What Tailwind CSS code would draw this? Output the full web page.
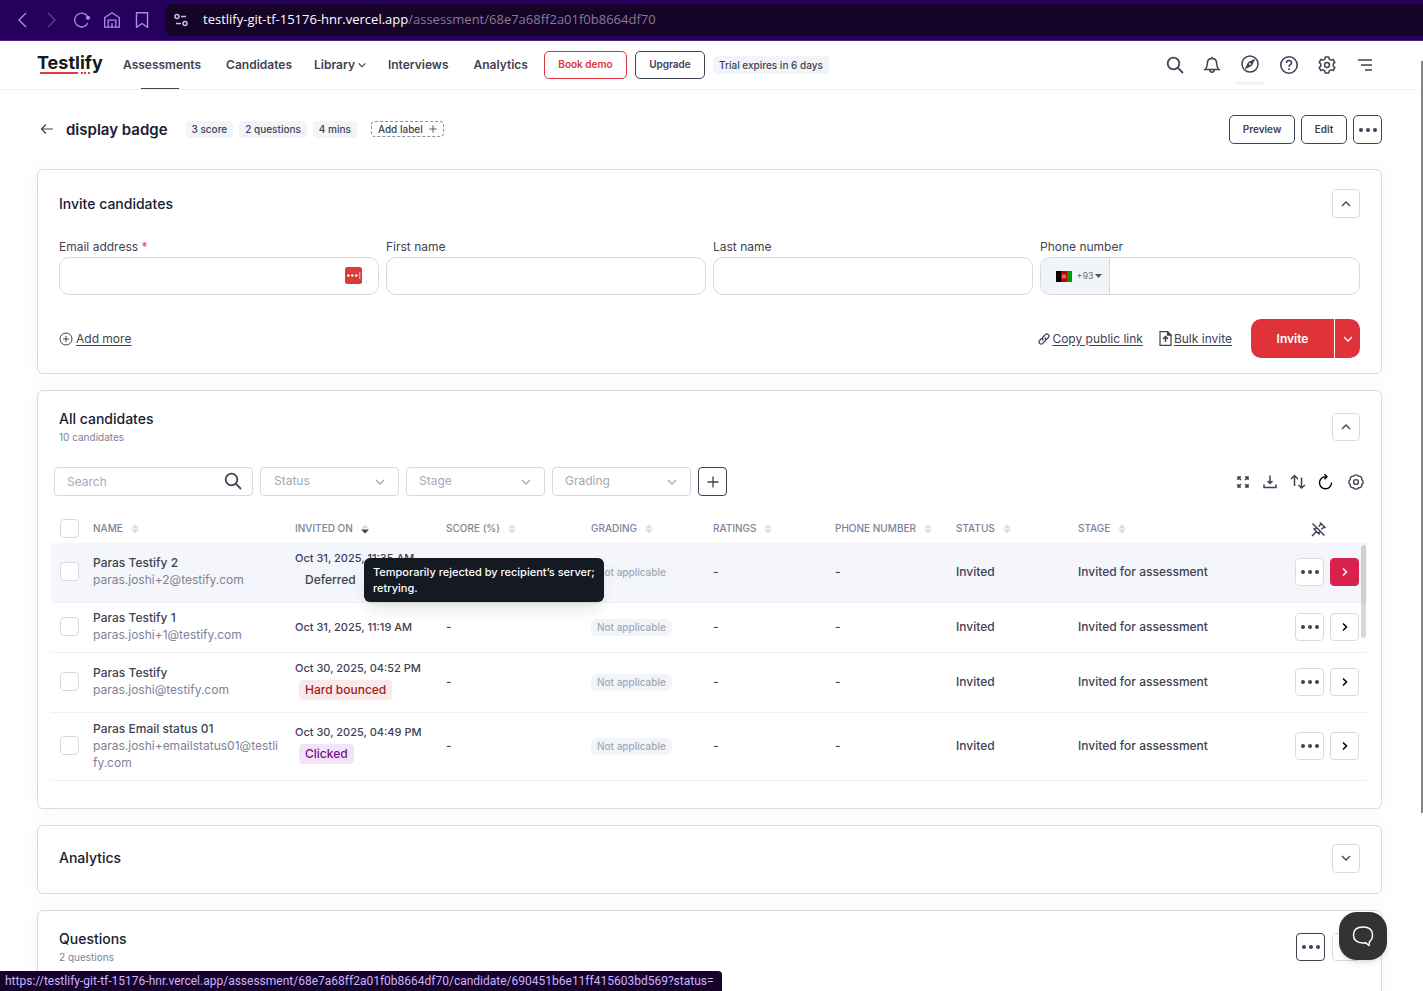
<!DOCTYPE html>
<html lang="en">
<head>
  <meta charset="UTF-8">
  <meta name="viewport" content="width=device-width, initial-scale=1">
  <title>Testlify - display badge</title>
  <script src="https://cdn.jsdelivr.net/npm/@tailwindcss/browser@4"></script>
</head>
<body class="h-screen overflow-hidden flex flex-col bg-white font-['Inter','Noto_Sans',sans-serif] text-xs text-[#3f4254]">

  <!-- Icon sprite -->
  <svg class="hidden">
    <symbol id="i-up" viewBox="0 0 12 12"><path d="M2 8l4-4 4 4" fill="none" stroke="currentColor" stroke-width="1.3"/></symbol>
    <symbol id="i-down" viewBox="0 0 12 12"><path d="M2 4l4 4 4-4" fill="none" stroke="currentColor" stroke-width="1.3"/></symbol>
    <symbol id="i-right" viewBox="0 0 12 12"><path d="M4 2.500L7.500 6 4 9.500" fill="none" stroke="currentColor" stroke-width="1.5"/></symbol>
    <symbol id="i-dots" viewBox="0 0 20 6"><g fill="currentColor"><circle cx="3" cy="3" r="2"/><circle cx="10" cy="3" r="2"/><circle cx="17" cy="3" r="2"/></g></symbol>
    <symbol id="i-search" viewBox="0 0 18 18"><g fill="none" stroke="currentColor" stroke-width="1.8"><circle cx="7.500" cy="7.500" r="5.800"/><path d="M11.700 11.700L17 17"/></g></symbol>
    <symbol id="i-sort" viewBox="0 0 8 10"><path d="M4 .5l4 4H0z" fill="#dcdcdf"/><path d="M4 9.500l-4-4h8z" fill="currentColor"/></symbol>
    <symbol id="i-plus" viewBox="0 0 12 12"><path d="M6 .5v11M.5 6h11" fill="none" stroke="currentColor" stroke-width="1.300"/></symbol>
  </svg>

  <!-- Browser bar -->
  <div class="shrink-0 h-[41px] bg-[#25005c] border-b border-[#4a1f86] flex items-center text-[#a98af5]">
    <div class="flex items-center gap-[14px] pl-[14px]">
      <button aria-label="Back"><svg class="size-4" viewBox="0 0 16 16" fill="none" stroke="currentColor" stroke-width="1.4"><path d="M12 1L5 8l7 7"/></svg></button>
      <button aria-label="Forward" class="text-[#5b3a9c]"><svg class="size-4" viewBox="0 0 16 16" fill="none" stroke="currentColor" stroke-width="1.400"><path d="M4 1l7 7-7 7"/></svg></button>
      <button aria-label="Reload"><svg class="size-4" viewBox="0 0 18 18" fill="none" stroke="currentColor" stroke-width="1.500"><path d="M15.500 12.500a7.800 7.800 0 1 1 .2-6.500"/><circle cx="15.700" cy="6.500" r="1.600" fill="currentColor"/></svg></button>
      <button aria-label="Home"><svg class="size-4" viewBox="0 0 16 16" fill="none" stroke="currentColor" stroke-width="1.300"><path d="M.7 5.500L8 .8l7.300 4.700v9.700H.7zM4.200 15V8.200h7.600V15M8 15v-4"/></svg></button>
      <button aria-label="Bookmark"><svg class="size-4" viewBox="0 0 16 16" fill="none" stroke="currentColor" stroke-width="1.400"><path d="M2.500.7h11v14.600L8 11.500l-5.500 3.800z"/></svg></button>
    </div>
    <div class="flex-1 ml-[15px] h-8 rounded-l-lg bg-[#150329] flex items-center gap-[15px] pl-[9px] font-['Open_Sans','Noto_Sans',sans-serif] text-[13px]">
      <svg class="size-[14px] text-[#c9c2d6]" viewBox="0 0 14 14" fill="none" stroke="currentColor" stroke-width="1.500"><circle cx="3" cy="3.500" r="2"/><path d="M7 3.500h5M2 10.500h5"/><circle cx="11" cy="10.500" r="2"/></svg>
      <p class="text-[#857b93]"><span class="text-white">testlify-git-tf-15176-hnr.vercel.app</span>/assessment/68e7a68ff2a01f0b8664df70</p>
    </div>
  </div>

  <!-- Page -->
  <div class="relative flex-1 min-h-0 overflow-hidden">
    <div class="absolute right-0 top-5 h-[752px] w-[2px] bg-[#85858a]"></div>

    <header class="h-[49px] border-b border-[#f1f2f5] mr-1 pl-[37px] pr-[44px] flex items-center justify-between">
      <nav class="flex items-center font-semibold">
        <a href="#" class="relative w-[65px] mr-[21px] pb-1 text-[18px] leading-6 font-bold text-[#151a22]">Testlify
          <svg class="absolute left-[3px] top-[21px] w-[51px] h-[2px]" viewBox="0 0 51 2" fill="#e8363d"><path d="M0 0h38v2H0zM41 0h2v2h-2zM44 0h2v2h-2zM48 0h2v2h-2z"/></svg>
        </a>
        <a href="#" class="relative mr-[25px]">Assessments<span class="absolute left-[18px] -bottom-[16px] w-[38px] h-px bg-[#3f4254]"></span></a>
        <a href="#" class="mr-[22px]">Candidates</a>
        <a href="#" class="mr-[21px] flex items-center gap-[2px]">Library<svg class="size-[10px]"><use href="#i-down"/></svg></a>
        <a href="#" class="mr-[25px]">Interviews</a>
        <a href="#" class="mr-4">Analytics</a>
        <button class="w-[83px] h-7 mr-2 rounded-[5px] border border-[#df3339] text-[#df3339] text-[10px] font-semibold">Book demo</button>
        <button class="w-[70px] h-7 mr-2 rounded-[5px] border border-[#3f4254] text-[10px] font-semibold">Upgrade</button>
        <span class="w-[116px] h-[18px] rounded bg-[#f1f5f9] text-[10px] leading-[18px] font-medium text-center">Trial expires in 6 days</span>
      </nav>
      <div class="flex items-center gap-[19px]">
        <button aria-label="Search"><svg class="size-[18px]"><use href="#i-search"/></svg></button>
        <button aria-label="Notifications"><svg class="size-[18px]" viewBox="0 0 18 18" fill="none" stroke="currentColor" stroke-width="1.500"><path d="M9 2.500c-3 0-4.600 2-4.600 4.700 0 3-.8 4.800-2.400 6.300h14c-1.600-1.500-2.400-3.300-2.400-6.300C13.600 4.500 12 2.500 9 2.500zM9 .8v1.700M6.800 13.800c0 3.200 4.400 3.200 4.400 0"/></svg></button>
        <button aria-label="Explore" class="relative"><svg class="size-5 mb-[3px]" viewBox="0 0 20 20" fill="none" stroke="currentColor" stroke-width="1.500"><circle cx="10" cy="10" r="8"/><path d="M14.500 5.500l-3 6-6 3 3-6z" fill="currentColor" stroke-width="1"/><circle cx="10" cy="10" r="1" fill="#fff" stroke="none"/></svg><span class="absolute -left-1 -bottom-2 w-7 h-1 rounded bg-[#f1f5f9]"></span></button>
        <button aria-label="Help"><svg class="size-5" viewBox="0 0 20 20" fill="none" stroke="currentColor" stroke-width="1.600"><circle cx="10" cy="10" r="8.200"/><path d="M7.500 8c0-3.300 5-3.200 5-.3 0 1.900-2.500 1.900-2.500 4"/><path d="M10 13.200v1.800"/></svg></button>
        <button aria-label="Settings"><svg class="size-[18px]" viewBox="0 0 18 18" fill="none" stroke="currentColor" stroke-width="1.500" stroke-linejoin="round"><path d="M7.300 1h3.400l.6 2.200 1.600.9 2.200-.6 1.700 2.900-1.600 1.600v2l1.600 1.600-1.700 2.900-2.200-.6-1.600.9-.6 2.200H7.300l-.6-2.200-1.600-.9-2.200.6-1.700-2.900L2.800 10V8L1.200 6.400l1.700-2.900 2.200.6 1.600-.9z"/><circle cx="9" cy="9" r="2.400"/></svg></button>
        <button aria-label="Menu"><svg class="size-5" viewBox="0 0 20 20" fill="none" stroke="currentColor" stroke-width="1.600"><path d="M3 5h14M6 10h11M10 15h7"/></svg></button>
      </div>
    </header>

    <main class="pl-[37px] pr-[41px] pt-[25px]">
      <div class="h-[29px] mb-[25px] flex items-center justify-between">
        <div class="flex items-center gap-[6px] text-[10px] font-medium">
          <a href="#" aria-label="Back" class="ml-[3px] mr-[6px]"><svg class="w-[14px] h-3" viewBox="0 0 14 12" fill="none" stroke="currentColor" stroke-width="1.200"><path d="M13 6H1.500M6 1.500L1.500 6 6 10.500"/></svg></a>
          <h1 class="text-[15px] font-semibold text-[#181c32] mr-3">display badge</h1>
          <span class="h-[17px] leading-[17px] px-[6px] rounded bg-[#f1f5f9]">3 score</span>
          <span class="h-[17px] leading-[17px] px-[6px] rounded bg-[#f1f5f9]">2 questions</span>
          <span class="h-[17px] leading-[17px] px-[6px] rounded bg-[#f1f5f9]">4 mins</span>
          <button class="h-4 ml-2 px-[6px] flex items-center gap-[6px] rounded border border-dashed border-[#8f919e]">Add label<svg class="size-2"><use href="#i-plus"/></svg></button>
        </div>
        <div class="flex gap-[6px] text-[10px] font-semibold">
          <button class="w-[66px] h-[29px] rounded-[5px] border border-[#3f4254]">Preview</button>
          <button class="w-[46px] h-[29px] rounded-[5px] border border-[#3f4254]">Edit</button>
          <button aria-label="More" class="w-[29px] h-[29px] rounded-[5px] border border-[#3f4254] flex items-center justify-center"><svg class="w-5 h-[6px]"><use href="#i-dots"/></svg></button>
        </div>
      </div>

      <div class="flex flex-col gap-4">
        <!-- Invite candidates -->
        <section class="rounded-md border border-[#d8dbe4] bg-white px-[21px] pt-[19px] pb-[15px] shadow-[0_0_20px_rgba(76,87,125,0.04)]">
          <div class="flex items-center justify-between mb-5">
            <h2 class="text-sm font-medium text-[#181c32]">Invite candidates</h2>
            <button aria-label="Collapse" class="w-7 h-[29px] rounded border border-[#d8dbe4] flex items-center justify-center"><svg class="size-3"><use href="#i-up"/></svg></button>
          </div>
          <form class="grid grid-cols-4 gap-[7px] mb-6">
            <div class="relative">
              <label for="email" class="block h-[19px] leading-[18px]">Email address <span class="text-[#f1416c]">*</span></label>
              <input id="email" type="email" class="w-full h-[38px] px-3 rounded-[10px] border border-[#d5d9e2]">
              <svg class="absolute right-[17px] top-[29px] size-[17px]" viewBox="0 0 17 17"><rect width="17" height="17" rx="2.500" fill="#d93c38"/><g fill="#fff"><circle cx="3.300" cy="8.500" r="1.300"/><circle cx="7.300" cy="8.500" r="1.300"/><circle cx="11.300" cy="8.500" r="1.300"/><path d="M14.300 5h1v7h-1z" opacity=".7"/></g></svg>
            </div>
            <div>
              <label for="first" class="block h-[19px] leading-[18px]">First name</label>
              <input id="first" type="text" class="w-full h-[38px] px-3 rounded-[10px] border border-[#d5d9e2]">
            </div>
            <div>
              <label for="last" class="block h-[19px] leading-[18px]">Last name</label>
              <input id="last" type="text" class="w-full h-[38px] px-3 rounded-[10px] border border-[#d5d9e2]">
            </div>
            <div>
              <label for="phone" class="block h-[19px] leading-[18px]">Phone number</label>
              <div class="flex h-[38px] rounded-[10px] border border-[#d5d9e2] overflow-hidden">
                <button type="button" class="w-[69px] shrink-0 pl-2 flex items-center justify-center bg-[#f1f5f9] border-r border-[#d5d9e2] text-[9px] text-[#6b6d78]">
                  <svg class="w-4 h-[11px] mr-1" viewBox="0 0 16 11"><path fill="#000" d="M0 0h5v11H0z"/><path fill="#be0000" d="M5 0h6v11H5z"/><path fill="#009900" d="M11 0h5v11h-5z"/><circle cx="8" cy="5.500" r="2.300" fill="#d9656a"/></svg>
                  +93<svg class="w-[7px] h-1 ml-px" viewBox="0 0 7 4"><path d="M0 0h7L3.500 4z" fill="#555"/></svg>
                </button>
                <input id="phone" type="tel" class="flex-1 min-w-0 px-3">
              </div>
            </div>
          </form>
          <div class="flex items-center justify-between">
            <a href="#" class="flex items-center gap-[3px]"><svg class="size-[14px]" viewBox="0 0 14 14" fill="none" stroke="currentColor"><circle cx="7" cy="7" r="6"/><path d="M7 4v6M4 7h6"/></svg><span class="underline underline-offset-2">Add more</span></a>
            <div class="flex items-center">
              <a href="#" class="flex items-center gap-[2px] mr-4"><svg class="size-3" viewBox="0 0 12 12" fill="none" stroke="currentColor" stroke-width="1.300" stroke-linecap="round"><path d="M5 7a2.200 2.200 0 0 1 0-3L7.300 1.600a2.100 2.100 0 0 1 3 3L8.800 6.200M7 5a2.200 2.200 0 0 1 0 3l-2.300 2.400a2.100 2.100 0 0 1-3-3L3.200 5.800"/></svg><span class="underline underline-offset-2">Copy public link</span></a>
              <a href="#" class="flex items-center gap-[2px] mr-[19px]"><svg class="w-[13px] h-[15px]" viewBox="0 0 13 15" fill="none" stroke="currentColor" stroke-width="1.200"><path d="M8.500.7H1v13.600h11V4.200z"/><path d="M8.500.7v3.500H12z" fill="currentColor"/><path d="M6.500 11V6M4 8l2.500-2.500L9 8" stroke-width="1.500"/></svg><span class="underline underline-offset-2">Bulk invite</span></a>
              <div class="flex h-[39px] rounded-[10px] overflow-hidden text-white">
                <button class="w-[83px] bg-[#df3339] font-semibold">Invite</button>
                <button aria-label="More invite options" class="w-[25px] ml-px bg-[#df3339] flex items-center justify-center"><svg class="size-3"><use href="#i-down"/></svg></button>
              </div>
            </div>
          </div>
        </section>

        <!-- All candidates -->
        <section class="rounded-md border border-[#d8dbe4] bg-white pt-[18px] pb-[27px] shadow-[0_0_20px_rgba(76,87,125,0.04)]">
          <div class="flex items-center justify-between px-[21px] mb-[22px]">
            <div>
              <h2 class="text-sm leading-5 font-medium text-[#181c32]">All candidates</h2>
              <p class="text-[10px] leading-4 text-[#7e8299]">10 candidates</p>
            </div>
            <button aria-label="Collapse" class="w-7 h-7 rounded border border-[#d8dbe4] flex items-center justify-center"><svg class="size-3"><use href="#i-up"/></svg></button>
          </div>

          <div class="flex items-center justify-between pl-4 pr-[17px] mb-[18px]">
            <div class="flex items-center gap-[7px]">
              <div class="relative">
                <input type="search" aria-label="Search" placeholder="Search" class="block w-[199px] h-[29px] px-3 rounded border border-[#d5d9e2] placeholder:text-[#a5a8b5]">
                <svg class="absolute right-[11px] top-[5px] size-[18px]"><use href="#i-search"/></svg>
              </div>
              <div class="relative">
                <select aria-label="Status" class="block appearance-none w-[139px] h-[29px] px-[13px] pb-[2px] rounded border border-[#d5d9e2] text-[#a5a8b5]"><option>Status</option></select>
                <svg class="absolute right-[13px] top-[9px] size-3 text-[#a5a8b5]"><use href="#i-down"/></svg>
              </div>
              <div class="relative">
                <select aria-label="Stage" class="block appearance-none w-[139px] h-[29px] px-3 pb-[2px] rounded border border-[#d5d9e2] text-[#a5a8b5]"><option>Stage</option></select>
                <svg class="absolute right-[13px] top-[9px] size-3 text-[#a5a8b5]"><use href="#i-down"/></svg>
              </div>
              <div class="relative">
                <select aria-label="Grading" class="block appearance-none w-[139px] h-[29px] px-3 pb-[2px] rounded border border-[#d5d9e2] text-[#a5a8b5]"><option>Grading</option></select>
                <svg class="absolute right-[13px] top-[9px] size-3 text-[#a5a8b5]"><use href="#i-down"/></svg>
              </div>
              <button aria-label="Add filter" class="size-[29px] rounded border border-[#3f4254] flex items-center justify-center"><svg class="size-3"><use href="#i-plus"/></svg></button>
            </div>
            <div class="flex items-center gap-3">
              <button aria-label="Fullscreen"><svg class="size-[14px]" viewBox="0 0 14 14" fill="none" stroke="currentColor" stroke-width="1.500"><path d="M2 5V2h3M2 2l3 3M9 2h3v3M12 2L9 5M2 9v3h3M2 12l3-3M9 12h3V9M12 12L9 9"/></svg></button>
              <button aria-label="Download"><svg class="size-4" viewBox="0 0 16 16" fill="none" stroke="currentColor" stroke-width="1.500"><path d="M8 1.500V9M5.500 7L8 9.500 10.500 7M2 10.500v3h12v-3"/></svg></button>
              <button aria-label="Sort"><svg class="size-4" viewBox="0 0 16 16" fill="none" stroke="currentColor" stroke-width="1.500"><path d="M4.500 12V1.500M1 5l3.500-3.500L8 5M11.500 3.500V14M8.500 11l3 3 3.500-3"/></svg></button>
              <button aria-label="Refresh" class="text-black"><svg class="size-4" viewBox="0 0 16 16" fill="none" stroke="currentColor" stroke-width="1.400"><path d="M13.500 8.500A6 6 0 1 1 8 2.800M6.500.3L9 2.800 6.500 5.200"/></svg></button>
              <button aria-label="Table settings" class="ml-[2px]"><svg class="size-4" viewBox="0 0 16 16" fill="none" stroke="currentColor" stroke-width="1.400" stroke-linejoin="round"><path d="M13.800 10.400A2.800 2.800 0 0 1 10.400 13.800 2.800 2.800 0 0 1 5.600 13.800 2.800 2.800 0 0 1 2.200 10.400 2.800 2.800 0 0 1 2.200 5.600 2.800 2.800 0 0 1 5.600 2.200 2.800 2.800 0 0 1 10.400 2.200 2.800 2.800 0 0 1 13.800 5.600 2.800 2.800 0 0 1 13.800 10.400z"/><circle cx="8" cy="8" r="2.400"/></svg></button>
            </div>
          </div>

          <div class="relative pl-[13px] pr-[14px]">
            <div class="absolute right-[15px] top-[31px] w-[5px] h-[93px] rounded bg-black/15"></div>
            <table class="w-full table-fixed text-left">
              <thead class="text-[10px] text-[#7e8299]">
                <tr class="h-[29px]">
                  <th class="w-[42px] pl-[9px]"><input type="checkbox" aria-label="Select all" class="block appearance-none size-[19px] rounded border border-[#d5d9e2] bg-white"></th>
                  <th class="w-[202px] font-medium">NAME<svg class="inline w-2 h-[10px] ml-2 text-[#dcdcdf]"><use href="#i-sort"/></svg></th>
                  <th class="w-[151px] font-medium">INVITED ON<svg class="inline w-2 h-[10px] ml-2 text-[#3f4254]"><use href="#i-sort"/></svg></th>
                  <th class="w-[145px] font-medium">SCORE (%)<svg class="inline w-2 h-[10px] ml-2 text-[#dcdcdf]"><use href="#i-sort"/></svg></th>
                  <th class="w-[122px] font-medium">GRADING<svg class="inline w-2 h-[10px] ml-2 text-[#dcdcdf]"><use href="#i-sort"/></svg></th>
                  <th class="w-[122px] font-medium">RATINGS<svg class="inline w-2 h-[10px] ml-2 text-[#dcdcdf]"><use href="#i-sort"/></svg></th>
                  <th class="w-[121px] font-medium">PHONE NUMBER<svg class="inline w-2 h-[10px] ml-2 text-[#dcdcdf]"><use href="#i-sort"/></svg></th>
                  <th class="w-[122px] font-medium">STATUS<svg class="inline w-2 h-[10px] ml-2 text-[#dcdcdf]"><use href="#i-sort"/></svg></th>
                  <th class="font-medium">STAGE<svg class="inline w-2 h-[10px] ml-2 text-[#dcdcdf]"><use href="#i-sort"/></svg></th>
                  <th class="w-[72px] pl-4"><button aria-label="Unpin column" class="block text-[#3f4254]"><svg class="size-4" viewBox="0 0 16 16" fill="none" stroke="currentColor" stroke-width="1.500"><path d="M1.500 2.500l12 12M9 1.500l5.500 5.500M10 2.500L7.800 5.700M13.500 6l-3.200 2.200M2.500 7.500l6 6M3.500 8.200l2.300-1.400M8 12.300l1.200-2.200M5.500 10.500l-4.500 4.500"/></svg></button></th>
                </tr>
              </thead>
              <tbody id="rows"></tbody>
            </table>
          </div>
        </section>

        <!-- Analytics -->
        <section class="rounded-md border border-[#d8dbe4] bg-white px-[21px] pt-[18px] pb-5 flex items-center justify-between shadow-[0_0_20px_rgba(76,87,125,0.04)]">
          <h2 class="text-sm font-medium text-[#181c32]">Analytics</h2>
          <button aria-label="Expand" class="w-7 h-[29px] rounded border border-[#d8dbe4] flex items-center justify-center"><svg class="size-3"><use href="#i-down"/></svg></button>
        </section>

        <!-- Questions -->
        <section class="rounded-md border border-[#d8dbe4] bg-white px-[21px] pt-[18px] pb-28 flex items-center justify-between shadow-[0_0_20px_rgba(76,87,125,0.04)]">
          <div>
            <h2 class="text-sm leading-5 font-medium text-[#181c32]">Questions</h2>
            <p class="text-[10px] leading-4 text-[#7e8299]">2 questions</p>
          </div>
          <div class="flex gap-[7px]">
            <button aria-label="More" class="w-[29px] h-7 rounded border border-[#3f4254] flex items-center justify-center"><svg class="w-5 h-[6px]"><use href="#i-dots"/></svg></button>
            <button aria-label="Expand" class="w-7 h-7 rounded border border-[#d8dbe4]"></button>
          </div>
        </section>
      </div>
    </main>
  </div>

  <!-- Chat launcher -->
  <button aria-label="Open chat" class="fixed right-9 bottom-[31px] size-12 rounded-[18px] bg-[#333] shadow-md flex items-center justify-center">
    <svg class="size-[22px]" viewBox="0 0 22 22" fill="none" stroke="#fff" stroke-width="1.500" stroke-linejoin="round"><path d="M11 2c6.500 0 9.500 2.700 9.500 8 0 3.200-1 5.400-3 6.700l-.5 3.800-3.500-2.800c-.8.200-1.600.2-2.500.2-6.500 0-9.500-2.600-9.500-7.900S4.500 2 11 2z"/></svg>
  </button>

  <!-- Link preview -->
  <div class="fixed left-0 bottom-0 h-5 pl-[5px] pr-2 rounded-tr bg-[#150329] text-[#cdb4ff] text-xs leading-5 font-[Roboto,'Noto_Sans',sans-serif] whitespace-nowrap">https://testlify-git-tf-15176-hnr.vercel.app/assessment/68e7a68ff2a01f0b8664df70/candidate/690451b6e11ff415603bd569?status=</div>

  <script>
    const candidates = [
      { name: "Paras Testify 2", email: "paras.joshi+2@testify.com", date: "Oct 31, 2025, 11:35 AM", badge: "Deferred", badgeClass: "bg-[#f1f5f9] text-[#3f4254]", tip: "Temporarily rejected by recipient’s server; retrying.", rowClass: "h-[59px] bg-[#f5f6fb]", goClass: "bg-[#d9214e] border-[#d9214e] text-white" },
      { name: "Paras Testify 1", email: "paras.joshi+1@testify.com", date: "Oct 31, 2025, 11:19 AM", rowClass: "h-[50px]" },
      { name: "Paras Testify", email: "paras.joshi@testify.com", date: "Oct 30, 2025, 04:52 PM", badge: "Hard bounced", badgeClass: "bg-[#fae9ea] text-[#9b1c1c]", rowClass: "h-[60px]" },
      { name: "Paras Email status 01", email: "paras.joshi+emailstatus01@testlify.com", date: "Oct 30, 2025, 04:49 PM", badge: "Clicked", badgeClass: "bg-[#f3e3f8] text-[#7a0b8f]", rowClass: "h-[68px]" }
    ];

    document.getElementById("rows").innerHTML = candidates.map(c => `
      <tr class="border-b border-[#eef1f7] font-medium ${c.rowClass}">
        <td class="pl-[9px] pb-[2px]"><input type="checkbox" aria-label="Select ${c.name}" class="block appearance-none size-[19px] rounded border border-[#d5d9e2] bg-white"></td>
        <td class="pr-[14px] pb-[2px] leading-[17px]">${c.name}<div class="font-normal text-[#7e8299] break-all">${c.email}</div></td>
        <td class="relative leading-[17px] whitespace-nowrap ${c.badge ? "pb-1" : ""}"><span class="block text-[11px]">${c.date}</span>
          ${c.badge ? `<div class="flex mt-[3px] ml-1"><span class="h-5 leading-5 px-[6px] rounded ${c.badgeClass}">${c.badge}</span></div>` : ""}
          ${c.tip ? `<div role="tooltip" class="absolute z-10 left-[69px] top-[15px] w-[240px] px-[9px] py-[6px] rounded-md bg-[#151a22] text-white text-[11px] leading-4 whitespace-normal shadow-lg">${c.tip}</div>` : ""}
        </td>
        <td>-</td>
        <td><span class="inline-block h-[17px] leading-[17px] px-[6px] rounded-md bg-[#f1f5f9] text-[10px] text-[#a5a8b5]">Not applicable</span></td>
        <td>-</td>
        <td>-</td>
        <td>Invited</td>
        <td>Invited for assessment</td>
        <td>
          <div class="flex gap-[6px]">
            <button aria-label="More" class="w-[29px] h-7 rounded border border-[#d8dbe4] bg-white flex items-center justify-center"><svg class="w-5 h-[6px]"><use href="#i-dots"/></svg></button>
            <button aria-label="Open" class="w-[29px] h-7 rounded border flex items-center justify-center ${c.goClass || "border-[#d8dbe4] bg-white text-black"}"><svg class="size-3"><use href="#i-right"/></svg></button>
          </div>
        </td>
      </tr>`).join("");
  </script>
</body>
</html>
